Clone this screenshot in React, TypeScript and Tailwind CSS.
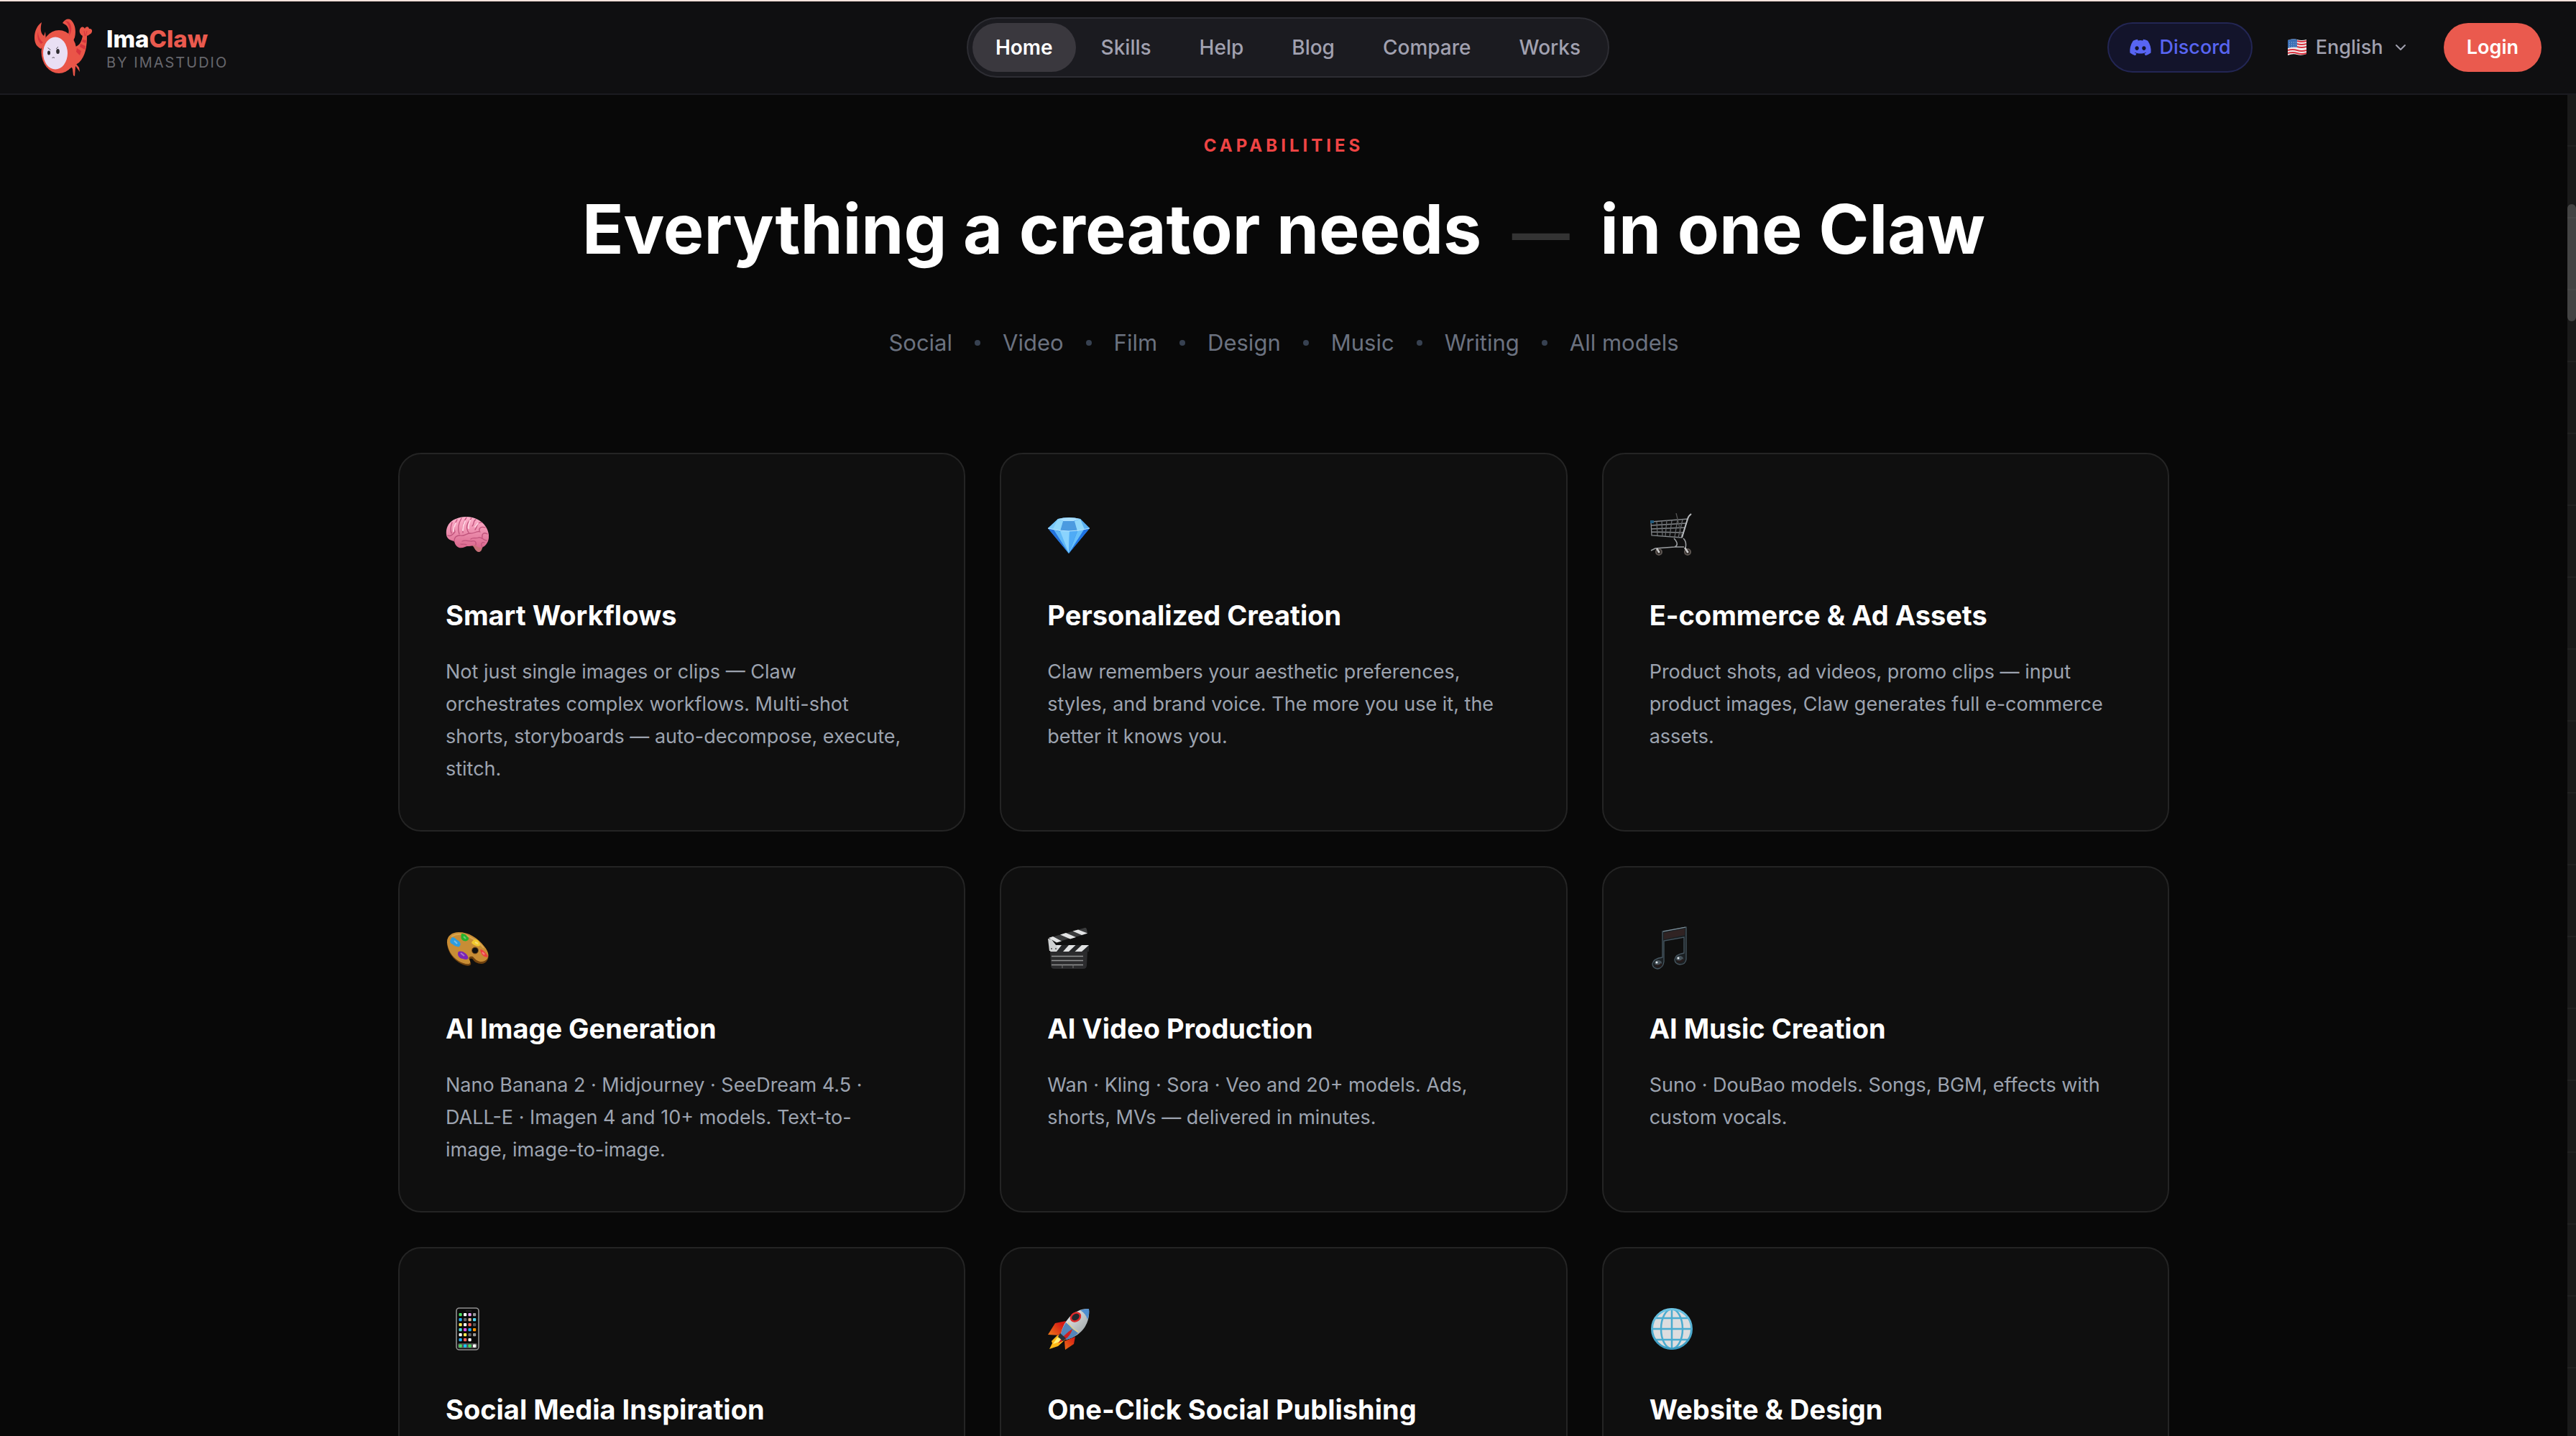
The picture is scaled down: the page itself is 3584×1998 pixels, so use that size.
import { Fragment, type ReactNode } from "react";
import { ChevronDown } from "lucide-react";
import { FaDiscord } from "react-icons/fa";

const navItems = ["Home", "Skills", "Help", "Blog", "Compare", "Works"];

const tags = ["Social", "Video", "Film", "Design", "Music", "Writing", "All models"];

function Logo() {
  return (
    <svg viewBox="0 0 80 80" className="size-20" aria-hidden="true">
      <g fill="#ea5548">
        <path d="M10 5C4 9 0 17 0 26c0 8 3 13 9 16l7-12-1-12-2 6C8 20 8 13 10 5z" />
        <path d="M39 6C42 1 47-1 51 2c6 6 7 16 5 24l-4 9-9-6c5-6 7-14 1-20z" />
        <path d="M57 39c6-2 9-8 10-16l6 1c0 15-2 28-11 37L45 72z" />
        <path d="M69 25c-6-2-8-8-5-12 3-3 5-1 6 1 1-3 5-4 6 0 5-1 5 5 2 7s-4 3-9 4z" />
        <ellipse cx="34" cy="46" rx="24.500" ry="30" />
        <path d="M51 66l7-3 4 5 1 6-5-7-1-1-1 14-2-1-1-9z" />
      </g>
      <path d="M42 3c6 3 8 13 6 21 5-7 4-16-1-20z" fill="#d8343d" />
      <path d="M5 18c-2 7 0 13 4 17l3-2c-5-4-7-9-7-15z" fill="#d8343d" />
      <path d="M59 41l6 4-2 6-5-5zM64 35l7 3-1 5-7-4zM67 29l5 1-1 4-5-2z" fill="#d8343d" />
      <path d="M69 17l1 7M73 17l-2 7" stroke="#d8343d" />
      <ellipse cx="29" cy="48" rx="17" ry="22.500" fill="#e9dff4" />
      <ellipse cx="20" cy="47.500" rx="2" ry="3" fill="#2c2a2f" />
      <ellipse cx="32.500" cy="45.500" rx="2.300" ry="3.500" fill="#2c2a2f" />
      <path d="M18.500 40.500l4 3M30 42l3-3M24.500 54.500q1.500-1.500 3.500 0" stroke="#5b5560" fill="none" />
    </svg>
  );
}

function Flag() {
  return (
    <svg viewBox="0 0 28 26" className="h-[26px] w-7" aria-hidden="true">
      <path d="M1 3q7-3 13-1t13 0v20q-7 3-13 1t-13 1z" fill="#f3eeee" />
      <path d="M14 4q6 2 13 0M14 8q6 2 13 0M14 12q6 2 13 0M1 17q7-2 13 0t13 0M1 21q7-2 13 0t13 0" stroke="#d8323f" strokeWidth="2" fill="none" />
      <path d="M1 3q7-3 13-1v11q-6-1-13 1z" fill="#3c6fb4" />
      <path d="M3 6h10M3 9h10M3 12h10" stroke="#9fc0e4" strokeDasharray="1 2" />
    </svg>
  );
}

function Icon({ children }: { children: ReactNode }) {
  return (
    <svg viewBox="0 0 60 60" className="size-[60px]" fill="none" aria-hidden="true">
      {children}
    </svg>
  );
}

function Brain() {
  return (
    <Icon>
      <defs>
        <linearGradient id="brain" x1="0" y1="0" x2="0" y2="1">
          <stop stopColor="#ffb3cd" />
          <stop offset="1" stopColor="#d9668c" />
        </linearGradient>
      </defs>
      <path d="M30 43q6 0 9 4 4 8 8 7t5-11l-9-5z" fill="#c77078" />
      <path d="M1 29C0 20 5 11 14 8c9-4 22-4 31 1 8 4 14 12 15 21 1 9-4 17-11 18-4 0-6-2-8-4-6 3-11 1-14 3-7 3-13 1-15-8-6-1-11-4-11-10z" fill="url(#brain)" />
      <g stroke="#c0547c" strokeWidth="1.300" strokeLinecap="round">
        <path d="M12 39c0-5 3-8 8-8 6 2 8-3 14-3 6 1 9-4 14-2M3 31c4 2 7-1 10-5M9 13c-2 5-3 9-1 15M16 9c-4 6-5 12-3 17M22 7c-4 7-6 14-3 22M29 6c-6 8-5 14-5 21M36 7c-7 7-8 14-4 20M42 9c-4 1-2 7-5 9M50 13c-7-1-6 7-9 10M55 20c-6-2-9 1-8 5M58 29c-5-3-8 0-7 5M57 38c-5 0-6-5-11-4-5 2-7-1-11 2M42 44c1-5-2-6-6-5-5 0-8-2-13 0M29 44c-3-2-5 0-8-1M51 47c-3-5 0-7 3-6" />
      </g>
      <path d="M14 14c-3 5-3 8-3 11M27 11c-3 6-3 9-3 13M34 10c-2 6-3 9-2 11M45 14l-4 5" stroke="#ffd0df" strokeWidth="2" strokeLinecap="round" />
    </Icon>
  );
}

function Diamond() {
  return (
    <Icon>
      <path d="M1 21L15 8q15-4 31 0l13 13-29 35z" fill="#3fa3f3" />
      <path d="M15 8q15-4 31 0l-9 3H22z" fill="#a9defe" />
      <path d="M15 8l7 3-4 14L1 21z" fill="#79c8fa" />
      <path d="M46 8l-9 3 5 14 17-4z" fill="#5bb2f4" />
      <path d="M22 11h16l4 14H18z" fill="#4c9be0" />
      <path d="M15 8L8 22l10 3 4-14zM46 8l6 15-10 2-4-14z" fill="#91d8fb" />
      <path d="M1 21l17 4 12 31z" fill="#2472dc" />
      <path d="M9 23l10 3 11 30z" fill="#5fb8f7" />
      <path d="M18 25h13l-1 31z" fill="#8ad3fd" />
      <path d="M31 25h11L30 56z" fill="#4fabf6" />
      <path d="M42 25l17-4-29 35z" fill="#1e73e4" />
      <path d="M42 25l9-2-21 33z" fill="#67c0fa" />
      <path d="M1 21q29 8 58 0" stroke="#b8e6ff" />
    </Icon>
  );
}

function Cart() {
  return (
    <Icon>
      <g stroke="#85898d" strokeWidth="1.300">
        <path d="M2 12l51-4-8 26-42-3zM2 17l50-3M2 22l48-2M3 26l44 1" />
        <path d="M10 12l1 19M17 11l1 21M24 10l-2 22M31 10l-3 23M39 9l-4 24M46 9l-6 25" stroke="#66696c" />
        <path d="M37 0l2 8 6 26" stroke="#555" />
      </g>
      <path d="M45 34l8-26q1-4 5-7" stroke="#b7babd" strokeWidth="2" />
      <path d="M34 35q8 9 1 12L8 49l-6 3M35 47h13M47 35q5 5 3 13" stroke="#9a9da0" strokeWidth="1.600" />
      <rect x="1" y="10" width="5" height="4" fill="#205b80" />
      <g fill="#28221f" stroke="#5e5753" strokeWidth="2">
        <circle cx="13" cy="54" r="4" />
        <circle cx="53" cy="54" r="4" />
      </g>
      <path d="M10 49l3 5M49 48l4 6" stroke="#c8c8c8" strokeWidth="2.500" />
      <circle cx="13" cy="54" r="1.500" fill="#ccc" />
      <circle cx="53" cy="54" r="1.500" fill="#ccc" />
    </Icon>
  );
}

function Palette() {
  return (
    <Icon>
      <path d="M2 24C1 14 8 9 18 9c14 0 27 8 36 19 6 7 7 14 4 19-3 6-10 6-16 3-5-3-3-6-8-5-3 2 4 6 0 9-4 2-11-1-16-4C8 43 3 34 2 24z" fill="#70420f" />
      <path d="M2 22C2 13 9 8 18 8c14 0 27 8 35 19 6 7 8 13 5 18-4 5-10 5-15 2-5-4-4-6-9-5-5 3 3 6-1 10-4 1-10-1-15-4C8 42 3 32 2 22z" fill="#c88d35" />
      <path d="M8 14q12-7 26 1 12 6 19 15" stroke="#dba84e" strokeWidth="2" />
      <circle cx="41" cy="33.500" r="4.500" fill="#101010" stroke="#80511d" />
      <path d="M9 15c4 0 5 3 9 5 5 4 2 10-2 8-3 0-5-3-8-4-3-3-2-5 1-9z" fill="#2d9de0" />
      <path d="M22 10c4 0 6 1 8 4 5 3 0 8-5 6-4-2-4-5-3-10z" fill="#25b32d" />
      <path d="M39 19c3-3 8 1 9 6 0 4-6 3-11-1-2-2 0-3 2-5z" fill="#f2c92d" />
      <path d="M48 32c4-1 10 7 11 10-3 2-10-1-11-10z" fill="#ee4040" />
      <path d="M18 35c4-2 11 2 13 7 2 4-3 5-7 3-5 0-9-6-6-10z" fill="#7a25b3" />
      <path d="M12 20l4 4M25 14l3 3M41 22l4 2M51 36l3 3M21 37l5 4" stroke="#fff" strokeOpacity=".35" strokeWidth="2" />
    </Icon>
  );
}

function Clapper() {
  return (
    <Icon>
      <path d="M4 34h52l-1 20q0 5-5 5H10q-5 0-5-5z" fill="#2b2b2d" />
      <path d="M2 16L52 2q2-1 3 2l1 6-43 12z" fill="#3a3b3c" />
      <path d="M2 16l6-2 12 6.500-7 2zM18 11.500l8-2.500 14 6-8 2.500zM35.500 6.500L43 4.500l13 5-8 2.500z" fill="#e3e4e5" />
      <path d="M4 26h54v9H4z" fill="#252628" />
      <path d="M10 26h10l-7 9H4zM30 26h9.500l-9.500 9h-8zM48 26h10l-10 9h-9.500z" fill="#e1e2e3" />
      <path d="M1 17l5 1 10 13-3 3H3z" fill="#cfd1d2" />
      <path d="M6 41.500h44M6 47.500h44M6 53.500h44" stroke="#929394" strokeWidth="1.400" />
      <path d="M21 53v5M36 53v5" stroke="#777" />
      <circle cx="6" cy="31" r="1" fill="#555" />
      <circle cx="12" cy="31" r="1" fill="#555" />
    </Icon>
  );
}

function Music() {
  return (
    <Icon>
      <path d="M18 7L51 1v45q-1 7-9 7-7-1-7-7 1-7 13-9V15L20 20v29q-1 9-9 10-7-1-7-7 1-7 14-9z" fill="#1b2023" stroke="#465660" strokeWidth="1.300" />
      <path d="M20 9l29-6v9l-29 6z" fill="#302323" />
      <path d="M19 7L50 1" stroke="#82939d" />
      <ellipse cx="12" cy="51" rx="5" ry="4" fill="#46525a" />
      <ellipse cx="42" cy="45" rx="5" ry="4" fill="#46525a" />
      <circle cx="10" cy="50" r="1.500" fill="#e5edf2" />
      <circle cx="40" cy="44" r="1.500" fill="#e5edf2" />
      <path d="M8 54q5 3 9-2M38 48q5 3 9-2" stroke="#241b1b" strokeWidth="3" />
    </Icon>
  );
}

// home screen of the phone, one row of apps per line
const phoneApps = [
  ["#4ade60", "#fff", "#e9a0f5", "#999"],
  ["#27a9f5", "#666", "#e4c09b", "#52d8f2"],
  ["#fce94f", "#fff", "#f8625a", "#555"],
  ["#4fd9dd", "#e052e8", "#25b4f7", "#ff9500"],
  ["#fff", "#fce94f", "#666", "#999"],
  ["#27a9f5", "#f8625a", "#fff"],
];

function Phone() {
  return (
    <Icon>
      <rect x="15" y="1" width="31" height="58" rx="4" fill="#0a0a0a" stroke="#919191" strokeWidth="1.600" />
      <path d="M28 5h8" stroke="#333" />
      {phoneApps.map((row, y) =>
        row.map((color, x) => (
          <rect key={`${x}-${y}`} x={18.5 + x * 6.5} y={8 + y * 7} width="4.200" height="4.200" rx="1" fill={color} />
        ))
      )}
      <rect x="17" y="50" width="27" height="7" rx="2" fill="#505050" />
      {["#4ade60", "#15cafb", "#4ade60", "#fff"].map((color, x) => (
        <rect key={x} x={18.5 + x * 6.5} y="51.500" width="4.200" height="4.200" rx="1" fill={color} />
      ))}
    </Icon>
  );
}

function Rocket() {
  return (
    <Icon>
      <defs>
        <linearGradient id="fin" x1="1" y1="0" x2="0" y2="1">
          <stop offset=".3" stopColor="#d51a14" />
          <stop offset="1" stopColor="#ffb11b" />
        </linearGradient>
        <linearGradient id="hull" x1="0" y1="0" x2="1" y2="1">
          <stop stopColor="#f7f8f9" />
          <stop offset="1" stopColor="#8f9799" />
        </linearGradient>
      </defs>
      <path d="M1 38l10-16 15-3-7 20zM39 41l-2 10-12 8-1-12z" fill="url(#fin)" />
      <path d="M14 39L6 47l1 3-4 8 12-4 10-9-3-6z" fill="#ffb817" />
      <path d="M14 42l-6 9 9-3 5-4z" fill="#fff27a" />
      <path d="M19 37C22 20 37 1 58 2c2 17-7 37-32 43z" fill="url(#hull)" />
      <path d="M46 4q7-2 12-2 1 8-2 15-2-8-10-13z" fill="#4f8fd0" />
      <path d="M26 21l17 15q-7 7-17 9l-7-8q2-9 7-16z" fill="#5485ba" />
      <path d="M29 21q5 9 14 13" stroke="#e2cf82" strokeWidth="1.500" />
      <path d="M35 30q-11 7-20 20 17-7 20-20z" fill="#d22020" />
      <path d="M18 36l8 7-4 4-7-6z" fill="#26323c" />
      <ellipse cx="39.500" cy="13.500" rx="7" ry="5.500" transform="rotate(-35 39.500 13.500)" fill="#21282d" stroke="#df2a2a" strokeWidth="2.500" />
    </Icon>
  );
}

function Globe() {
  return (
    <Icon>
      <defs>
        <linearGradient id="globe" x1="0" y1="0" x2="0" y2="1">
          <stop stopColor="#6cc4e4" />
          <stop offset="1" stopColor="#3899bf" />
        </linearGradient>
      </defs>
      <circle cx="31" cy="30" r="27.500" fill="#dddddf" />
      <g stroke="#4aacd0" strokeWidth="2.500">
        <ellipse cx="31" cy="30" rx="15" ry="27.500" />
        <path d="M31 2v56M3 30h56M8 15h46M8 45h46" />
        <circle cx="31" cy="30" r="27.500" stroke="url(#globe)" strokeWidth="3" />
      </g>
    </Icon>
  );
}

type Feature = { icon: ReactNode; title: string; text?: string };

const features: Feature[] = [
  {
    icon: <Brain />,
    title: "Smart Workflows",
    text: "Not just single images or clips — Claw orchestrates complex workflows. Multi-shot shorts, storyboards — auto-decompose, execute, stitch.",
  },
  {
    icon: <Diamond />,
    title: "Personalized Creation",
    text: "Claw remembers your aesthetic preferences, styles, and brand voice. The more you use it, the better it knows you.",
  },
  {
    icon: <Cart />,
    title: "E-commerce & Ad Assets",
    text: "Product shots, ad videos, promo clips — input product images, Claw generates full e-commerce assets.",
  },
  {
    icon: <Palette />,
    title: "AI Image Generation",
    text: "Nano Banana 2 · Midjourney · SeeDream 4.5 · DALL-E · Imagen 4 and 10+ models. Text-to-image, image-to-image.",
  },
  {
    icon: <Clapper />,
    title: "AI Video Production",
    text: "Wan · Kling · Sora · Veo and 20+ models. Ads, shorts, MVs — delivered in minutes.",
  },
  {
    icon: <Music />,
    title: "AI Music Creation",
    text: "Suno · DouBao models. Songs, BGM, effects with custom vocals.",
  },
  { icon: <Phone />, title: "Social Media Inspiration" },
  { icon: <Rocket />, title: "One-Click Social Publishing" },
  { icon: <Globe />, title: "Website & Design" },
];

function Header() {
  return (
    <header className="grid shrink-0 grid-cols-[1fr_auto_1fr] items-center border-b-2 border-[#1b1b20] bg-[#0f0f11] px-12 py-[22px]">
      <a href="#" className="flex items-center gap-5">
        <Logo />
        <span className="flex flex-col pt-1">
          <span className="text-[33px] leading-[38px] font-extrabold text-white">
            Ima<span className="text-[#ea5a4e]">Claw</span>
          </span>
          <span className="text-[20px] leading-7 tracking-[2px] text-[#67676d]">BY IMASTUDIO</span>
        </span>
      </a>

      <nav className="flex gap-[3px] rounded-full border-2 border-[#2d2d33] bg-[#1b1b20] p-1.5">
        {navItems.map((item, i) => (
          <a
            key={item}
            href="#"
            className={
              i === 0
                ? "rounded-full bg-[#3a383e] px-8 py-3.5 text-[28px] leading-10 font-semibold text-white"
                : "rounded-full px-8 py-3.5 text-[28px] leading-10 font-medium text-[#a1a1b0]"
            }
          >
            {item}
          </a>
        ))}
      </nav>

      <div className="flex items-center justify-end">
        <a
          href="#"
          className="flex items-center gap-2.5 rounded-full border-2 border-[#232654] bg-[#13142b] px-7 py-[13px] text-[27px] leading-10 font-medium text-[#5865f2]"
        >
          <FaDiscord className="size-8" />
          Discord
        </a>
        <label className="ml-12 flex items-center gap-3 text-[#a1a1b0]">
          <Flag />
          <select aria-label="Language" className="appearance-none bg-transparent text-[27px] leading-10 font-medium">
            <option>English</option>
          </select>
          <ChevronDown className="size-6" />
        </label>
        <button className="ml-12 rounded-full bg-[#ea5a4e] px-8 py-3.5 text-[27px] leading-10 font-semibold text-white">
          Login
        </button>
      </div>
    </header>
  );
}

function FeatureCard({ icon, title, text }: Feature) {
  return (
    <article className="min-h-[482px] rounded-[32px] border-2 border-[#242424] bg-[#0f0f0f] px-16 pt-16 pb-[63px]">
      <div className="mb-[39px] flex h-[91px] items-center pt-1">{icon}</div>
      <h3 className="mb-[26px] text-[38px] leading-[60px] font-bold text-white">{title}</h3>
      {text && <p className="pr-4 text-[27px] leading-[45px] text-[#9ca3af]">{text}</p>}
    </article>
  );
}

export default function App() {
  return (
    <div className="flex h-screen flex-col overflow-hidden bg-[#080808] font-['Inter','Liberation_Sans',sans-serif]">
      <div className="h-0.5 shrink-0 bg-[#f9e2dc]" />
      <Header />
      <div className="flex min-h-0 flex-1">
        <main className="flex-1 overflow-hidden px-12 pt-[51px]">
          <div className="text-center">
            <p className="mb-[39px] text-2xl leading-10 font-bold tracking-[5px] text-[#ef4444]">CAPABILITIES</p>
            <h2 className="mb-[77px] text-[95px] leading-[114px] font-bold text-white">
              Everything a creator needs <span className="mx-5 text-[80px] leading-none text-[#333333]">—</span> in one Claw
            </h2>
            <div className="mb-[129px] flex items-center justify-center gap-[31px] text-[31px] leading-[48px] text-[#6b7280]">
              {tags.map((tag, i) => (
                <Fragment key={tag}>
                  {i > 0 && <span className="size-2 rounded-full bg-[#374151]" />}
                  <span>{tag}</span>
                </Fragment>
              ))}
            </div>
          </div>
          <div className="mx-auto grid max-w-[2464px] grid-cols-3 gap-12">
            {features.map((feature) => (
              <FeatureCard key={feature.title} {...feature} />
            ))}
          </div>
        </main>
        {/* scroll track with its thumb */}
        <div className="w-3 bg-[#1a1a1a] bg-[linear-gradient(#222222_2px,transparent_2px)] bg-[length:100%_100px] bg-[position:0_70px] pt-[152px]">
          <div className="h-[163px] rounded-full bg-white/18" />
        </div>
      </div>
    </div>
  );
}
